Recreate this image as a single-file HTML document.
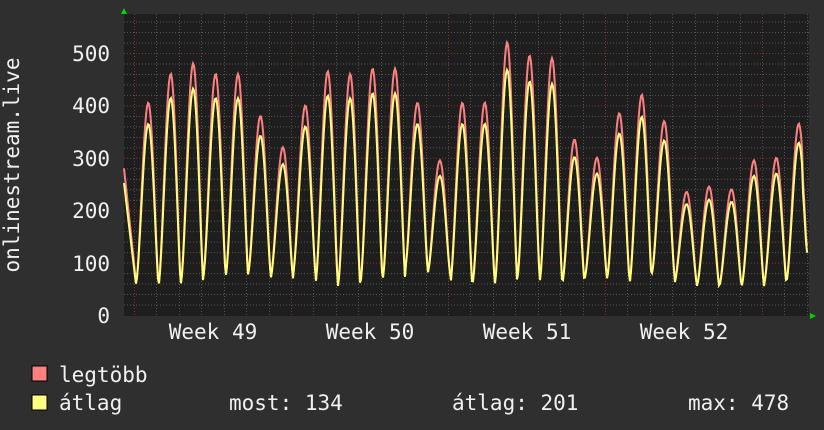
<!DOCTYPE html><html><head><meta charset="utf-8"><style>
html,body{margin:0;padding:0;background:#2f2f2f;width:824px;height:430px;overflow:hidden}
svg{display:block}
text{font-family:"DejaVu Sans Mono","Liberation Mono",monospace;fill:#f0f0f0;font-size:21px}
</style></head><body>
<svg id="s" width="824" height="430" xmlns="http://www.w3.org/2000/svg">
<rect x="124" y="14" width="685" height="302" fill="#1e1e1e"/>
<g id="grid"></g>
<g id="data"></g>
<polygon points="121,14 127,14 124,8" fill="#00d000"/>
<polygon points="810,313 810,319 816,316" fill="#00d000"/>
<text x="110" y="61" text-anchor="end">500</text>
<text x="110" y="113" text-anchor="end">400</text>
<text x="110" y="166" text-anchor="end">300</text>
<text x="110" y="218" text-anchor="end">200</text>
<text x="110" y="271" text-anchor="end">100</text>
<text x="110" y="323" text-anchor="end">0</text>
<text x="213" y="339" text-anchor="middle">Week 49</text>
<text x="370" y="339" text-anchor="middle">Week 50</text>
<text x="527" y="339" text-anchor="middle">Week 51</text>
<text x="684" y="339" text-anchor="middle">Week 52</text>
<text transform="translate(19,165) rotate(-90)" text-anchor="middle">onlinestream.live</text>
<rect x="32" y="366" width="15" height="15" fill="#ff8080" stroke="#000" stroke-width="1"/>
<rect x="32" y="395" width="15" height="15" fill="#ffff80" stroke="#000" stroke-width="1"/>
<text x="59" y="382">legtöbb</text>
<text x="59" y="410">átlag</text>
<text x="229" y="410">most: 134</text>
<text x="452" y="410">átlag: 201</text>
<text x="688" y="410">max: 478</text>
</svg>
<script>
var NS="http://www.w3.org/2000/svg",g=document.getElementById('grid'),d=document.getElementById('data');
function L(x1,y1,x2,y2,c){var l=document.createElementNS(NS,'line');l.setAttribute('x1',x1);l.setAttribute('y1',y1);l.setAttribute('x2',x2);l.setAttribute('y2',y2);l.setAttribute('stroke',c);l.setAttribute('stroke-width',1);l.setAttribute('stroke-dasharray','1,2');g.appendChild(l);}
function Y(v){return 315-v*0.524;}
for(var v=20;v<=560;v+=20){if(v%100)L(124,Y(v)+.5,809,Y(v)+.5,'#555');}
for(var x=134;x<809;x+=22.43){L(Math.round(x)+.5,14,Math.round(x)+.5,316,'#555');}
for(var v=100;v<=500;v+=100)L(124,Y(v)+.5,809,Y(v)+.5,'#7a3838');
[134,291,448,605,762].forEach(function(x){L(x+.5,14,x+.5,316,'#7a3838');});
var pk=[405,460,480,460,460,380,320,400,465,460,470,470,405,295,405,405,520,495,490,335,300,385,420,370,235,245,240,295,300,365];
var mn=[60,55,60,75,75,80,70,80,60,55,60,70,90,80,55,60,60,70,65,60,70,70,60,80,60,55,55,55,60,65];
function val(x,f){var t=(x-136)/22.43,k=Math.floor(t),ph=t-k;var i=Math.max(0,Math.min(pk.length-1,k));var P=pk[i]*f,M=mn[Math.max(0,Math.min(mn.length-1,k))];var s;if(ph<0.55){s=Math.pow(Math.sin(ph/0.55*Math.PI/2),1.6);}else{s=Math.pow(Math.cos((ph-0.55)/0.45*Math.PI/2),1.3);}return M+(P-M)*s;}
function poly(f,c){var p=[];for(var x=124;x<=808;x+=1){var v;if(x<136){v=(280-(x-124)*18)*f;if(v<60)v=60;}else v=val(x,f);if(x>802)v=Math.max(v*0.9,134*f);p.push(x+','+Y(v).toFixed(1));}var e=document.createElementNS(NS,'polyline');e.setAttribute('points',p.join(' '));e.setAttribute('fill','none');e.setAttribute('stroke',c);e.setAttribute('stroke-width',2);d.appendChild(e);}
poly(1,'#ff8080');poly(0.9,'#ffff80');
</script>
</body></html>
